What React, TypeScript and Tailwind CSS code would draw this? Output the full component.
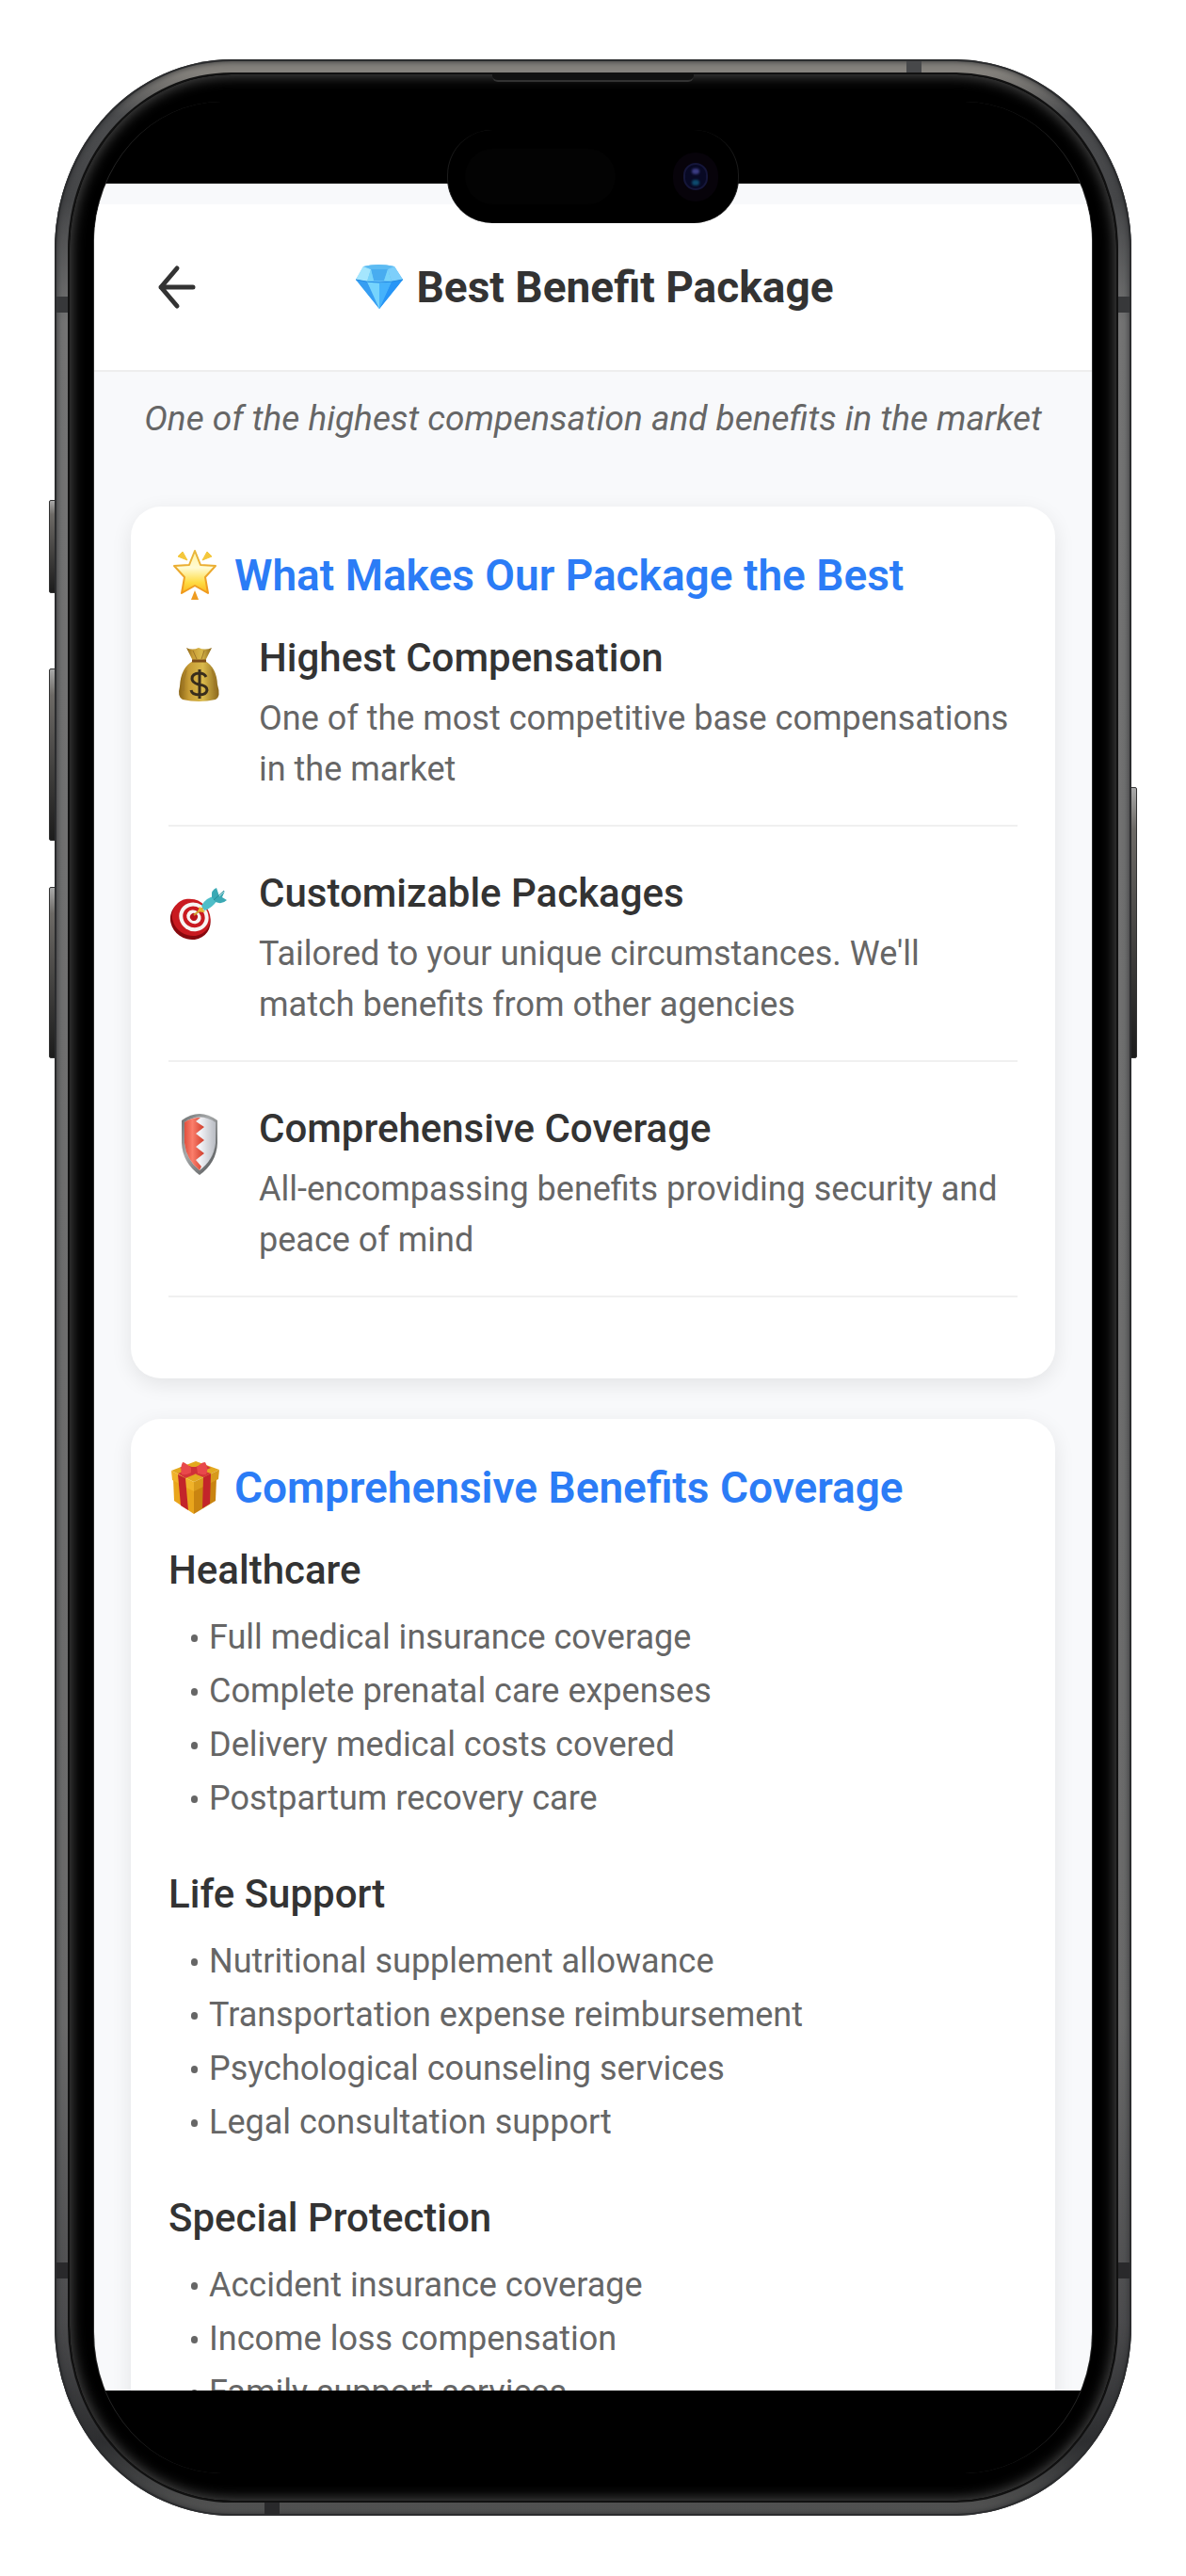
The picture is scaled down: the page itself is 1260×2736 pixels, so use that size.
import type { ReactNode } from "react";

interface Highlight {
    title: string;
    description: string;
    icon: ReactNode;
}

interface BenefitGroup {
    title: string;
    items: string[];
}

function ArrowIcon() {
    return (
        <svg viewBox="0 0 44 48" className="w-[44px] h-[48px]" fill="none" stroke="#333333" strokeWidth="5" strokeLinecap="round" strokeLinejoin="round" aria-hidden="true">
            <path d="M22 4 5 24l17 20M5 24h34" />
        </svg>
    );
}

function DiamondIcon() {
    return (
        <svg viewBox="0 0 56 56" className="w-14 h-14 shrink-0" aria-hidden="true">
            <defs>
                <linearGradient id="gem" x1="0" y1="0" x2="1" y2="1">
                    <stop offset="0" stopColor="#8bdcfb" />
                    <stop offset="1" stopColor="#2592f3" />
                </linearGradient>
            </defs>
            <path d="M11 6Q27 2 44 6L53 20 28 51 3 20Z" fill="url(#gem)" />
            <path d="M11 6 19 9 15 22 3 20Z" fill="#a5e6fd" />
            <path d="M19 9h18l-4 12H22Z" fill="#48acf0" />
            <path d="M11 6Q27 2 44 6L37 9H19Z" fill="#5dbbf2" />
            <path d="m37 9 7-3 9 14-12 2Z" fill="#7dcffb" />
            <path d="M19 9 22 21 15 22ZM37 9l4 13-8-1Z" fill="#79d4fa" />
            <path d="m3 20 12 2 13 29Z" fill="#379ef2" />
            <path d="M15 22Q28 25 41 22L28 51Z" fill="#76d4fd" />
            <path d="M28 24 41 22 28 51Z" fill="#45b2fb" />
            <path d="m41 22 12-2-25 31Z" fill="#2795f6" />
            <path d="M3 20Q28 26 53 20" fill="none" stroke="#258de4" strokeWidth="1" />
        </svg>
    );
}

function StarIcon() {
    return (
        <svg viewBox="0 0 56 56" className="w-14 h-14 shrink-0" aria-hidden="true">
            <defs>
                <linearGradient id="star" x1="0" y1="0" x2="0" y2="1">
                    <stop offset="0" stopColor="#fff3a1" />
                    <stop offset="0.4" stopColor="#fffbd3" />
                    <stop offset="0.75" stopColor="#ffdc42" />
                    <stop offset="1" stopColor="#fbb51c" />
                </linearGradient>
                <linearGradient id="starEdge" x1="0" y1="0" x2="0" y2="1">
                    <stop offset="0" stopColor="#e8b83e" />
                    <stop offset="1" stopColor="#f0991b" />
                </linearGradient>
            </defs>
            <path d="M28 2 34 17 50 18 39 30 42 47 28 39 14 47 17 30 6 18 22 17Z" fill="url(#star)" stroke="url(#starEdge)" strokeWidth="2" strokeLinejoin="round" />
            <path d="m10 8 5-5 5 9ZM46 8l-5-5-5 9Z" fill="#f4c73c" stroke="#f4c73c" strokeLinejoin="round" />
            <path d="M28 44 32 54H24Z" fill="#ee9c22" />
        </svg>
    );
}

function GiftIcon() {
    return (
        <svg viewBox="0 0 56 56" className="w-14 h-14 shrink-0" aria-hidden="true">
            <path d="M5 18 27 27V56L6 42Z" fill="#e9a51c" />
            <path d="M51 18 27 27V56L50 42Z" fill="#c98410" />
            <path d="M3 10 29 0 54 9 27 22Z" fill="#e3a91f" />
            <path d="M3 10 27 22V32L4 20Z" fill="#f0b32a" />
            <path d="M54 9 27 22V32L53 19Z" fill="#d89a1b" />
            <path d="M10 14 18 18 21 52 13 47ZM45 13 37 17 36 50 44 45Z" fill="#c3242a" />
            <path d="M10 13 37 3 45 7 18 18ZM37 17 45 13 19 4 12 7Z" fill="#d53439" />
            <path d="M27 10Q18 1 15 1Q12 7 14 14Q21 15 27 10ZM27 10Q34 1 39 1Q43 8 40 14Q33 15 27 10Z" fill="#e8484b" />
            <path d="m24 6 6 0 1 7-7 1Z" fill="#cf3038" />
        </svg>
    );
}

function MoneyBagIcon() {
    return (
        <svg viewBox="0 0 64 70" className="w-[64px] h-[70px]" aria-hidden="true">
            <defs>
                <linearGradient id="bag" x1="0" y1="0" x2="1" y2="0">
                    <stop offset="0" stopColor="#8a6416" />
                    <stop offset="0.25" stopColor="#c79c35" />
                    <stop offset="0.6" stopColor="#d9b94b" />
                    <stop offset="1" stopColor="#8b671c" />
                </linearGradient>
            </defs>
            <path d="M19 6Q25 9 32 6 39 9 46 6L39 20H26Z" fill="url(#bag)" />
            <path d="M26 20H39Q51 27 52 45 56 58 50 61 32 65 15 61 9 58 12 47 13 27 26 20Z" fill="url(#bag)" />
            <path d="M25 20H40" stroke="#7c4d1a" strokeWidth="3" />
            <path d="M26 9 30 18M38 9 35 18M19 30Q15 40 16 52M46 29Q50 40 49 52" stroke="#9f7729" strokeWidth="1" fill="none" />
            <path d="M40 37Q38 33 33 33 25 33 25 39 25 43 32 45 41 46 41 51 40 56 33 56 25 56 24 51M33 29V60" fill="none" stroke="#382d1c" strokeWidth="3" />
        </svg>
    );
}

function TargetIcon() {
    return (
        <svg viewBox="0 0 64 70" className="w-[64px] h-[70px]" aria-hidden="true">
            <g transform="rotate(35 23 44)">
                <ellipse cx="24" cy="45" rx="22" ry="20" fill="#87090e" />
                <ellipse cx="23" cy="42" rx="21" ry="19" fill="#c91a20" />
                <ellipse cx="25" cy="40" rx="16" ry="15" fill="#f8f5f3" />
                <ellipse cx="25" cy="40" rx="12" ry="11" fill="#c91a20" />
                <ellipse cx="25" cy="40" rx="8" ry="7" fill="#f8f5f3" />
                <ellipse cx="25" cy="40" rx="4" ry="4" fill="#b8151b" />
            </g>
            <path d="m27 40 10-8" stroke="#d1a02b" strokeWidth="2" />
            <path d="m33 31 6 5-2 1-6-1Z" fill="#e4b432" />
            <path d="M35 30Q40 21 49 20L52 24Q46 33 38 35Z" fill="#4fbec8" />
            <path d="M46 21Q45 13 51 11L54 20 60 14 57 21 62 24Q57 29 50 26Z" fill="#3ba9b4" />
            <path d="M48 24 59 14" stroke="#238b96" strokeWidth="1" />
        </svg>
    );
}

function ShieldIcon() {
    return (
        <svg viewBox="0 0 64 70" className="w-[64px] h-[70px]" aria-hidden="true">
            <defs>
                <linearGradient id="rim" x1="0" y1="0" x2="1" y2="1">
                    <stop offset="0" stopColor="#6d7071" />
                    <stop offset="0.4" stopColor="#a6a9aa" />
                    <stop offset="1" stopColor="#4c4e50" />
                </linearGradient>
                <linearGradient id="steel" x1="0" y1="0" x2="1" y2="0">
                    <stop offset="0" stopColor="#cfd2d8" />
                    <stop offset="0.5" stopColor="#f2f3f7" />
                    <stop offset="1" stopColor="#b9bcc3" />
                </linearGradient>
                <linearGradient id="enamel" x1="0" y1="0" x2="1" y2="0">
                    <stop offset="0" stopColor="#e0503f" />
                    <stop offset="0.4" stopColor="#fb7e6b" />
                    <stop offset="1" stopColor="#cf3d2c" />
                </linearGradient>
            </defs>
            <path d="M14 8Q33-6 52 8V32Q51 53 33 66 15 53 14 32Z" fill="url(#rim)" />
            <path d="M17 10Q33-1 50 10V32Q48 50 33 61 19 50 17 32Z" fill="url(#steel)" />
            <path d="M17 10Q24 5 34 5L29 9 38 15 29 22 38 29 29 36 38 43 29 50 35 57 33 61Q19 50 17 32Z" fill="url(#enamel)" />
        </svg>
    );
}

const highlights: Highlight[] = [
    {
        title: "Highest Compensation",
        description: "One of the most competitive base compensations in the market",
        icon: <MoneyBagIcon />,
    },
    {
        title: "Customizable Packages",
        description: "Tailored to your unique circumstances. We'll match benefits from other agencies",
        icon: <TargetIcon />,
    },
    {
        title: "Comprehensive Coverage",
        description: "All-encompassing benefits providing security and peace of mind",
        icon: <ShieldIcon />,
    },
];

const benefitGroups: BenefitGroup[] = [
    {
        title: "Healthcare",
        items: [
            "Full medical insurance coverage",
            "Complete prenatal care expenses",
            "Delivery medical costs covered",
            "Postpartum recovery care",
        ],
    },
    {
        title: "Life Support",
        items: [
            "Nutritional supplement allowance",
            "Transportation expense reimbursement",
            "Psychological counseling services",
            "Legal consultation support",
        ],
    },
    {
        title: "Special Protection",
        items: [
            "Accident insurance coverage",
            "Income loss compensation",
            "Family support services",
        ],
    },
];

function Card({ icon, title, children }: { icon: ReactNode; title: string; children: ReactNode }) {
    return (
        <section className="bg-white rounded-[32px] px-10 pt-[45px] pb-[86px] shadow-[0_6px_22px_rgba(0,0,0,0.09)]">
            <h2 className="flex items-center gap-3.5 mb-8 text-[46px] leading-[56px] font-semibold text-[#2b7cf6]">
                {icon}
                {title}
            </h2>
            {children}
        </section>
    );
}

function SideButton({ className }: { className: string }) {
    return (
        <div
            className={`absolute w-2 rounded-[2px] border border-[#333] bg-linear-to-b from-[#aaa] via-[#6d6a66] via-15% to-[#1c1c1c] ${className}`}
        />
    );
}

function PhoneFrame({ children }: { children: ReactNode }) {
    return (
        <div className="relative h-full">
            {/* Hardware buttons */}
            <SideButton className="-left-1.5 top-[468px] h-[99px]" />
            <SideButton className="-left-1.5 top-[647px] h-[183px]" />
            <SideButton className="-left-1.5 top-[879px] h-[182px]" />
            <SideButton className="-right-1.5 top-[773px] h-[288px]" />

            {/* Metal band, glass and screen */}
            <div className="relative h-full p-3.5 rounded-[188px/202px] bg-[linear-gradient(to_bottom,#85827d_0,#85827d_14px,#4c4d4f_60px,#454648_150px,#747474_280px,#6a6a6a_80%,#4c4c4e_92%,#2e2f31_97%,#565656_100%)] shadow-[inset_0_0_0_2px_#2b2c2e,inset_0_0_7px_2px_#2f3032]">
                <div className="absolute top-0.5 left-[905px] w-4 h-3 bg-[#47484a]" />
                <div className="absolute bottom-0.5 left-[223px] w-4 h-3 bg-[#29292b]" />
                <div className="absolute left-0.5 top-[252px] w-3 h-[17px] bg-[#37383a]" />
                <div className="absolute right-0.5 top-[252px] w-3 h-[17px] bg-[#37383a]" />
                <div className="absolute left-0.5 bottom-[252px] w-3 h-[17px] bg-[#29292b]" />
                <div className="absolute right-0.5 bottom-[252px] w-3 h-[17px] bg-[#29292b]" />

                <div className="relative h-full px-[25px] py-[29px] rounded-[174px/188px] border-2 border-[#111] bg-black shadow-[inset_0_0_14px_2px_#4a4a4a]">
                    <div className="absolute top-0 left-1/2 -translate-x-1/2 w-[214px] h-2 rounded-b-[6px] border-b-2 border-[#333] bg-[#111]" />
                    <div className="h-full flex flex-col rounded-[136px/150px] overflow-hidden border-x border-[#2a2a2a] bg-black">
                        <div className="h-[87px] shrink-0" />
                        {children}
                        <div className="h-[88px] shrink-0" />
                    </div>
                </div>

                {/* Camera island */}
                <div className="absolute top-[75px] left-1/2 -translate-x-1/2 w-[310px] h-[99px] pl-[18px] pr-[21px] flex items-center justify-between rounded-[48px] border-x border-[#1c1c1c] bg-black">
                    <div className="w-[160px] h-[59px] rounded-full bg-[#030303]" />
                    <div className="w-12 h-[52px] flex items-center justify-center rounded-full bg-[#07030a]">
                        <div className="w-[26px] h-[29px] flex flex-col items-center justify-center gap-1.5 rounded-full border-2 border-[#15163a] bg-[#080924]">
                            <div className="w-2 h-1.5 rounded-full bg-[#3b3c83] blur-[1px]" />
                            <div className="w-2 h-1.5 rounded-full bg-[#0d4a6e] blur-[1px]" />
                        </div>
                    </div>
                </div>
            </div>
        </div>
    );
}

export default function App() {
    return (
        <div className="h-screen px-[58px] pt-[63px] pb-16 bg-white font-[Roboto,sans-serif] text-[#333333]">
            <PhoneFrame>
                <div className="flex-1 min-h-0 flex flex-col pt-[22px] bg-[#f8f9fb]">
                    {/* Header */}
                    <header className="h-[178px] shrink-0 flex items-center px-[66px] bg-white border-b-2 border-[#eeeeee]">
                        <button type="button" aria-label="Back" className="w-16 shrink-0">
                            <ArrowIcon />
                        </button>
                        <h1 className="flex-1 flex items-center justify-center gap-3 text-[46px] leading-[56px] font-bold">
                            <DiamondIcon />
                            Best Benefit Package
                        </h1>
                        <div className="w-16 shrink-0" />
                    </header>

                    {/* Content */}
                    <main className="flex-1 min-h-0 overflow-y-auto [scrollbar-width:none] px-[39px] pt-[22px]">
                        <p className="mb-[65px] text-center text-[37px] leading-[56px] italic text-[#666666]">
                            One of the highest compensation and benefits in the market
                        </p>

                        <div className="flex flex-col gap-[43px]">
                            <Card icon={<StarIcon />} title="What Makes Our Package the Best">
                                <ul className="flex flex-col gap-[43px]">
                                    {highlights.map((h) => (
                                        <li key={h.title} className="flex pb-8 border-b-2 border-[#f0f0f0]">
                                            <div className="w-24 shrink-0 pt-[11px]">{h.icon}</div>
                                            <div className="flex-1">
                                                <h3 className="mb-[9px] text-[42px] leading-[56px] font-medium">{h.title}</h3>
                                                <p className="text-[36px] leading-[54px] text-[#666666]">{h.description}</p>
                                            </div>
                                        </li>
                                    ))}
                                </ul>
                            </Card>

                            <Card icon={<GiftIcon />} title="Comprehensive Benefits Coverage">
                                <div className="flex flex-col gap-[45px]">
                                    {benefitGroups.map((group) => (
                                        <div key={group.title}>
                                            <h3 className="mb-[15px] text-[42px] leading-[56px] font-medium">{group.title}</h3>
                                            <ul className="pl-6 text-[36px] leading-[57px] text-[#666666]">
                                                {group.items.map((item) => (
                                                    <li key={item} className="flex items-center gap-3">
                                                        <span className="w-[7px] h-2 shrink-0 rounded-full bg-[#666666]" />
                                                        {item}
                                                    </li>
                                                ))}
                                            </ul>
                                        </div>
                                    ))}
                                </div>
                            </Card>
                        </div>
                    </main>
                </div>
            </PhoneFrame>
        </div>
    );
}
